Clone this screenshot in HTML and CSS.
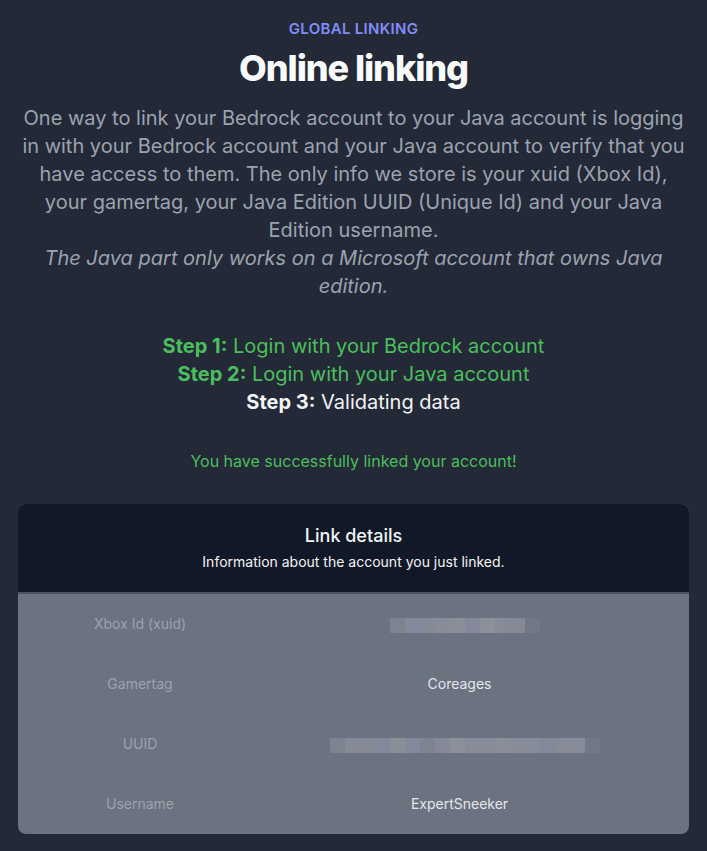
FILE: index.html
```html
<!DOCTYPE html>
<html lang="en">
<head>
<meta charset="utf-8">
<title>Online linking</title>
<link rel="stylesheet" href="styles.css">
</head>
<body>
<main class="page">
  <section class="intro">
    <p class="eyebrow">Global linking</p>
    <h1 class="title">Online linking</h1>
    <p class="lead">One way to link your Bedrock account to your Java account is logging in with your Bedrock account and your Java account to verify that you have access to them. The only info we store is your xuid (Xbox Id), your gamertag, your Java Edition UUID (Unique Id) and your Java Edition username.<br><i class="note">The Java part only works on a Microsoft account that owns Java edition.</i></p>
  </section>

  <section class="steps">
    <p class="step done"><b>Step 1:</b> Login with your Bedrock account</p>
    <p class="step done"><b>Step 2:</b> Login with your Java account</p>
    <p class="step current"><b>Step 3:</b> Validating data</p>
  </section>

  <p class="success">You have successfully linked your account!</p>

  <section class="card">
    <header class="card-head">
      <h2 class="card-title">Link details</h2>
      <p class="card-sub">Information about the account you just linked.</p>
    </header>
    <dl class="details">
      <div class="row">
        <dt class="label">Xbox Id (xuid)</dt>
        <dd class="value"><span class="blur">
          <i class="px p1"></i><i class="px p2"></i><i class="px p3"></i><i class="px p4"></i><i class="px p5"></i><i class="px p6"></i><i class="px p7"></i><i class="px p8"></i><i class="px p9"></i><i class="px pend"></i>
        </span></dd>
      </div>
      <div class="row">
        <dt class="label">Gamertag</dt>
        <dd class="value">Coreages</dd>
      </div>
      <div class="row">
        <dt class="label">UUID</dt>
        <dd class="value"><span class="blur">
          <i class="px p1"></i><i class="px p3"></i><i class="px p3"></i><i class="px p2"></i><i class="px p5"></i><i class="px p2"></i><i class="px p1"></i><i class="px p6"></i><i class="px p7"></i><i class="px p4"></i><i class="px p4"></i><i class="px p5"></i><i class="px p4"></i><i class="px p4"></i><i class="px p2"></i><i class="px p8"></i><i class="px p8"></i><i class="px pend"></i>
        </span></dd>
      </div>
      <div class="row">
        <dt class="label">Username</dt>
        <dd class="value">ExpertSneeker</dd>
      </div>
    </dl>
  </section>
</main>
</body>
</html>
```

FILE: styles.css
```css
* { box-sizing: border-box; }
html, body { margin: 0; padding: 0; }
body {
  background: #232937;
  font-family: Inter, "Noto Sans", "Liberation Sans", sans-serif;
  color: #f3f4f6;
}
p, h1, h2, dl, dd, dt { margin: 0; }

.page {
  padding: 18px 18px 18px;
  display: flex;
  flex-direction: column;
  align-items: stretch;
}

.intro { text-align: center; }
.eyebrow {
  font-size: 15px;
  line-height: 22px;
  font-weight: 600;
  letter-spacing: 0.02em;
  text-transform: uppercase;
  color: #818cf8;
}
.title {
  margin-top: 6px;
  font-size: 36px;
  line-height: 44px;
  font-weight: 800;
  letter-spacing: -0.03em;
  color: #f9fafb;
}
.lead {
  margin-top: 14px;
  font-size: 20px;
  line-height: 28px;
  color: #9ca3af;
}
.note { font-style: italic; }

.steps {
  margin-top: 32px;
  text-align: center;
  font-size: 20px;
  line-height: 28px;
}
.step b { font-weight: 700; }
.step.done { color: #4bbf5c; }
.step.current { color: #f3f4f6; }

.success {
  margin-top: 33px;
  text-align: center;
  font-size: 16px;
  line-height: 24px;
  color: #4bbf5c;
}

.card {
  margin-top: 31px;
  border-radius: 8px;
  overflow: hidden;
  background: #6b7280;
}
.card-head {
  background: #111827;
  text-align: center;
  padding: 18px 16px 20px;
  border-bottom: 2px solid #4b5260;
}
.card-title {
  font-size: 18px;
  line-height: 28px;
  font-weight: 500;
  color: #f3f4f6;
}
.card-sub {
  margin-top: 2px;
  font-size: 14px;
  line-height: 20px;
  color: #f3f4f6;
}

.details { display: flex; flex-direction: column; }
.row {
  display: grid;
  grid-template-columns: 244px 1fr;
  padding-right: 32px;
  height: 60px;
  align-items: center;
  font-size: 14px;
  line-height: 20px;
}
.label { text-align: center; color: #9ca3af; }
.value { text-align: center; color: #e5e7eb; }

.blur { display: inline-flex; vertical-align: middle; height: 15px; margin-left: 10px; }
.px { display: block; width: 15px; height: 15px; }
.p1 { background: #7e8390; }
.p2 { background: #83889a; }
.p3 { background: #868a96; }
.p4 { background: #888c98; }
.p5 { background: #8a8e99; }
.p6 { background: #84889a; }
.p7 { background: #8c909b; }
.p8 { background: #878b97; }
.p9 { background: #858996; }
.pend { background: #737886; }
```
